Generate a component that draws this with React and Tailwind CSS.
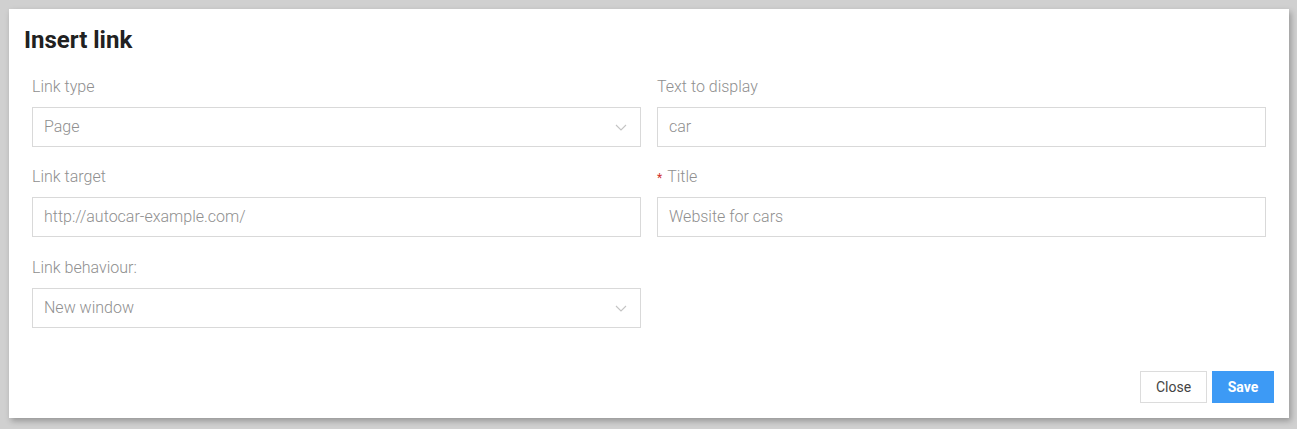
import React from "react";

function Chevron() {
  return (
    <svg width="12" height="8" viewBox="0 0 12 8" className="absolute right-[13px] top-[16px]">
      <path d="M1 1 L6 6 L11 1" fill="none" stroke="#c4c4c4" strokeWidth="1.1" />
    </svg>
  );
}

function Field({ label, value, select, required, className = "" }) {
  return (
    <div className={"flex flex-col " + className}>
      <div className="h-[20px] leading-[20px] text-[16px] font-light text-[#8f8f8f] mb-[10px] flex items-center">
        {required && <span className="text-[#d0302b] text-[12px] font-normal mr-[5px] mt-[2px]">*</span>}
        {label}
      </div>
      <div className="relative h-[40px] border border-[#d9d9d9] bg-white flex items-center pl-[11px] text-[16px] font-light text-[#8f8f8f]">
        {value}
        {select && <Chevron />}
      </div>
    </div>
  );
}

export default function App() {
  return (
    <div className="w-[1297px] h-[429px] bg-[#d0d0d0] pt-[9px] pl-[9px]" style={{ fontFamily: "Roboto, 'Liberation Sans', sans-serif" }}>
      <div className="w-[1280px] h-[409px] bg-white shadow-[2px_3px_6px_rgba(0,0,0,0.28)] flex flex-col">
        <div className="pl-[15px] pt-[17px] h-[28px] leading-[28px] text-[24px] font-bold text-[#212121] box-content">
          Insert link
        </div>
        <div className="grid grid-cols-2 gap-x-[16px] px-[23px] mt-[23px]">
          <Field label="Link type" value="Page" select />
          <Field label="Text to display" value="car" />
          <Field label="Link target" value="http://autocar-example.com/" className="mt-[20px]" />
          <Field label="Title" value="Website for cars" required className="mt-[20px]" />
          <Field label="Link behaviour:" value="New window" select className="mt-[21px]" />
        </div>
        <div className="mt-auto flex justify-end gap-[5px] pr-[15px] pb-[15px]">
          <button className="w-[67px] h-[32px] border border-[#dcdcdc] bg-white text-[14px] text-[#444]">Close</button>
          <button className="w-[62px] h-[32px] bg-[#3d9af5] text-[14px] font-bold text-white">Save</button>
        </div>
      </div>
    </div>
  );
}
